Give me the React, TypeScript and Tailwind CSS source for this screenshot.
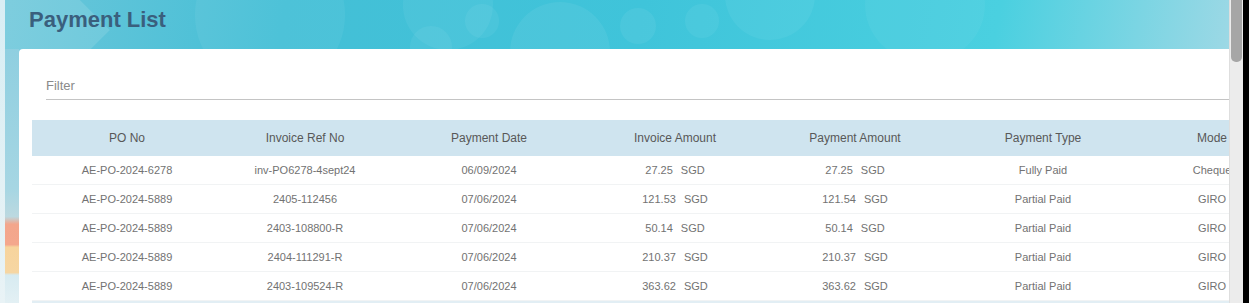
import React from 'react';

interface PaymentRow {
  poNo: string;
  invoiceRef: string;
  paymentDate: string;
  invoiceAmount: string;
  paymentAmount: string;
  paymentType: string;
  mode: string;
}

const rows: PaymentRow[] = [
  { poNo: 'AE-PO-2024-6278', invoiceRef: 'inv-PO6278-4sept24', paymentDate: '06/09/2024', invoiceAmount: '27.25', paymentAmount: '27.25', paymentType: 'Fully Paid', mode: 'Cheque' },
  { poNo: 'AE-PO-2024-5889', invoiceRef: '2405-112456', paymentDate: '07/06/2024', invoiceAmount: '121.53', paymentAmount: '121.54', paymentType: 'Partial Paid', mode: 'GIRO' },
  { poNo: 'AE-PO-2024-5889', invoiceRef: '2403-108800-R', paymentDate: '07/06/2024', invoiceAmount: '50.14', paymentAmount: '50.14', paymentType: 'Partial Paid', mode: 'GIRO' },
  { poNo: 'AE-PO-2024-5889', invoiceRef: '2404-111291-R', paymentDate: '07/06/2024', invoiceAmount: '210.37', paymentAmount: '210.37', paymentType: 'Partial Paid', mode: 'GIRO' },
  { poNo: 'AE-PO-2024-5889', invoiceRef: '2403-109524-R', paymentDate: '07/06/2024', invoiceAmount: '363.62', paymentAmount: '363.62', paymentType: 'Partial Paid', mode: 'GIRO' },
];

const headers = ['PO No', 'Invoice Ref No', 'Payment Date', 'Invoice Amount', 'Payment Amount', 'Payment Type', 'Mode'];

// 列幅は参照画像の中心位置から算出
const gridCols = 'grid grid-cols-[190px_166px_202px_170px_190px_186px_152px] w-[1256px]';

function Amount({ value }: { value: string }) {
  return (
    <span>
      {value}
      <span className="ml-[8px]">SGD</span>
    </span>
  );
}

export default function App() {
  return (
    <div className="flex w-[1249px] h-[303px] overflow-hidden bg-black font-['Liberation_Sans',Arial,sans-serif]">
      {/* 左端の細いライン */}
      <div className="w-[5px] shrink-0 bg-[linear-gradient(180deg,#d9eef4_0%,#e9f3f6_100%)]" />

      {/* メイン領域 */}
      <div className="relative flex flex-col w-[1224px] shrink-0 overflow-hidden bg-[linear-gradient(100deg,#6cc6da_0%,#44bfd6_22%,#3fc4da_50%,#4ad0e0_78%,#9ad8e5_96%,#b4dde6_100%)]">
        {/* 背景の泡 */}
        <div className="pointer-events-none absolute inset-0">
          <div className="absolute left-[-40px] top-[-30px] w-[120px] h-[120px] rotate-45 bg-white/12" />
          <div className="absolute left-[190px] top-[-60px] w-[150px] h-[150px] rounded-full bg-white/5" />
          <div className="absolute left-[398px] top-[-40px] w-[90px] h-[90px] rounded-full bg-white/5" />
          <div className="absolute left-[405px] top-[26px] w-[42px] h-[42px] rounded-full bg-white/5" />
          <div className="absolute left-[460px] top-[4px] w-[34px] h-[34px] rounded-full bg-white/5" />
          <div className="absolute left-[505px] top-[2px] w-[100px] h-[100px] rounded-full bg-white/6" />
          <div className="absolute left-[615px] top-[8px] w-[36px] h-[36px] rounded-full bg-white/6" />
          <div className="absolute left-[680px] top-[4px] w-[34px] h-[34px] rounded-full bg-white/5" />
          <div className="absolute left-[720px] top-[-60px] w-[90px] h-[100px] rounded-full bg-white/5" />
          <div className="absolute left-[860px] top-[-50px] w-[120px] h-[110px] rounded-full bg-white/4" />
        </div>

        {/* タイトル */}
        <div className="relative h-[49px] shrink-0 pl-[24px] pt-[6px]">
          <h1 className="text-[22px] leading-[28px] font-bold text-[#3a5f7d]">Payment List</h1>
        </div>

        <div className="relative flex flex-1 min-h-0">
          {/* 左側の背景帯 */}
          <div className="w-[14px] shrink-0 bg-[linear-gradient(180deg,#8fcfe0_0%,#a6d6e3_55%,#bcd9e0_66%,#f3a68c_69%,#f4a78d_77%,#f7d49d_78%,#f6d6a2_88%,#d7ebf1_89%,#e3f0f4_100%)]" />

          {/* カード */}
          <div className="flex-1 min-w-0 overflow-hidden rounded-tl-[4px] bg-white">
            {/* フィルター */}
            <div className="pl-[27px] pt-[29px]">
              <div className="border-b border-[#c4c4c4] pb-[5px] text-[13px] leading-[16px] text-[#8a8a8a]">Filter</div>
            </div>

            {/* テーブル */}
            <div className="ml-[13px] mt-[20px]">
              <div className={`${gridCols} h-[36px] items-center bg-[#cfe4ef] text-[12px] text-[#585858]`}>
                {headers.map((h) => (
                  <div key={h} className="text-center whitespace-nowrap">
                    {h}
                  </div>
                ))}
              </div>
              {rows.map((r, i) => (
                <div
                  key={i}
                  className={`${gridCols} h-[29px] items-center border-b border-[#f1f3f4] text-[11px] text-[#727272]`}
                >
                  <div className="text-center whitespace-nowrap">{r.poNo}</div>
                  <div className="text-center whitespace-nowrap">{r.invoiceRef}</div>
                  <div className="text-center whitespace-nowrap">{r.paymentDate}</div>
                  <div className="text-center whitespace-nowrap">
                    <Amount value={r.invoiceAmount} />
                  </div>
                  <div className="text-center whitespace-nowrap">
                    <Amount value={r.paymentAmount} />
                  </div>
                  <div className="text-center whitespace-nowrap">{r.paymentType}</div>
                  <div className="text-center whitespace-nowrap">{r.mode}</div>
                </div>
              ))}
              <div className="h-[4px] w-[1256px] bg-[#e2eef4]" />
            </div>
          </div>
        </div>
      </div>

      {/* スクロールバー */}
      <div className="w-[14px] shrink-0 bg-[#ececec] border-l border-[#dedede] px-[1px]">
        <div className="h-[62px] rounded-b-[5px] bg-[#a6a6a6]" />
      </div>
      <div className="flex-1 bg-black" />
    </div>
  );
}
